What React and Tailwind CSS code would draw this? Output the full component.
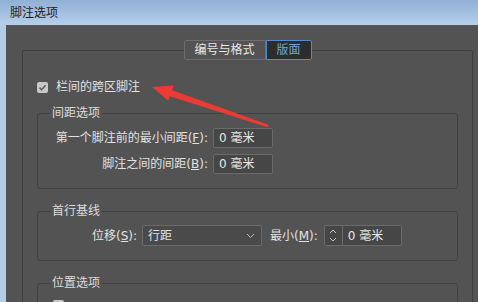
import React from "react";

function Checkbox() {
  return (
    <div className="w-[11px] h-[11px] rounded-[2px] bg-[#c8c8c8] flex items-center justify-center">
      <svg width="9" height="9" viewBox="0 0 9 9">
        <path d="M1.5 4.6 L3.6 6.7 L7.6 2.3" stroke="#5a5a5a" strokeWidth="1.5" fill="none" />
      </svg>
    </div>
  );
}

function Input({ children }) {
  return (
    <div className="w-[60px] h-[20px] border border-[#6a6a6a] rounded-[2px] bg-[#464646] flex items-center pl-[5px] text-[#e6e6e6]">
      {children}
    </div>
  );
}

export default function App() {
  return (
    <div
      className="relative w-[478px] h-[302px] overflow-hidden bg-[#535353] flex flex-col text-[12px] leading-[16px]"
      style={{ fontFamily: '"DejaVu Sans", "Noto Sans CJK SC", sans-serif' }}
    >
      <div className="h-[25px] shrink-0 bg-gradient-to-b from-[#90b0d6] to-[#b6cfea] flex items-center pl-[10px] text-[#1c1c1c]">
        脚注选项
      </div>
      <div className="flex flex-1 min-h-0">
        <div className="w-[6px] bg-[#b4cce6]" />
        <div className="flex-1 pl-[16px] pr-[5px] pt-[25px]">
          <div className="relative border border-[#3f3f3f] rounded-[2px] h-[300px] px-[14px]">
            <div className="absolute left-1/2 -translate-x-1/2 -top-[11px] flex h-[20px]">
              <div className="px-[10px] flex items-center border border-[#6e6e6e] rounded-l-[2px] bg-[#535353] text-[#e8e8e8]">
                编号与格式
              </div>
              <div className="px-[10px] flex items-center border border-[#4d8fd2] rounded-r-[2px] bg-[#2c2c2c] text-[#6ea7df]">
                版面
              </div>
            </div>

            <div className="mt-[30px] h-[12px] flex items-center gap-[8px] text-[#e2e2e2]">
              <Checkbox />
              <span>栏间的跨区脚注</span>
            </div>

            <fieldset className="mt-[12px] border border-[#404040] rounded-[3px] pt-[7px] pb-[14px]">
              <legend className="ml-[12px] px-[2px] text-[#dcdcdc]">间距选项</legend>
              <div className="flex flex-col gap-[6px]">
                <div className="flex items-center gap-[5px]">
                  <div className="w-[170px] text-right text-[#e2e2e2]">
                    第一个脚注前的最小间距(<u>F</u>):
                  </div>
                  <Input>0 毫米</Input>
                </div>
                <div className="flex items-center gap-[5px]">
                  <div className="w-[170px] text-right text-[#e2e2e2]">
                    脚注之间的间距(<u>B</u>):
                  </div>
                  <Input>0 毫米</Input>
                </div>
              </div>
            </fieldset>

            <fieldset className="mt-[14px] border border-[#404040] rounded-[3px] pt-[6px] pb-[14px]">
              <legend className="ml-[12px] px-[2px] text-[#dcdcdc]">首行基线</legend>
              <div className="flex items-center text-[#e2e2e2]">
                <div className="w-[99px] text-right">
                  位移(<u>S</u>):
                </div>
                <div className="ml-[5px] w-[120px] h-[21px] border border-[#6a6a6a] rounded-[2px] bg-[#4a4a4a] flex items-center justify-between pl-[5px] pr-[6px]">
                  <span>行距</span>
                  <svg width="9" height="6" viewBox="0 0 9 6">
                    <path d="M1 1 L4.5 4.5 L8 1" stroke="#bdbdbd" strokeWidth="1" fill="none" />
                  </svg>
                </div>
                <div className="ml-[8px]">
                  最小(<u>M</u>):
                </div>
                <div className="ml-[6px] w-[78px] h-[21px] border border-[#6a6a6a] rounded-[2px] bg-[#464646] flex items-stretch">
                  <div className="w-[18px] border-r border-[#6a6a6a] flex flex-col items-center justify-center gap-[3px]">
                    <svg width="8" height="5" viewBox="0 0 8 5">
                      <path d="M1 4 L4 1 L7 4" stroke="#c4c4c4" strokeWidth="1" fill="none" />
                    </svg>
                    <svg width="8" height="5" viewBox="0 0 8 5">
                      <path d="M1 1 L4 4 L7 1" stroke="#c4c4c4" strokeWidth="1" fill="none" />
                    </svg>
                  </div>
                  <div className="flex items-center pl-[5px] text-[#e6e6e6]">0 毫米</div>
                </div>
              </div>
            </fieldset>

            <fieldset className="mt-[14px] border border-[#404040] rounded-[3px] pt-[9px] pb-[14px]">
              <legend className="ml-[12px] px-[2px] text-[#dcdcdc]">位置选项</legend>
              <div className="pl-[15px] flex items-center gap-[8px]">
                <div className="w-[11px] h-[11px] rounded-[2px] bg-[#c8c8c8]" />
              </div>
            </fieldset>
          </div>
        </div>
      </div>

      <svg className="absolute left-0 top-0 pointer-events-none" width="478" height="302" viewBox="0 0 478 302">
        <polygon
          points="152,87 173.6,85.5 172.1,90.2 268.5,124.8 267.5,127.2 169.9,96.2 168.2,100.8"
          fill="#ec3a35"
        />
      </svg>
    </div>
  );
}
